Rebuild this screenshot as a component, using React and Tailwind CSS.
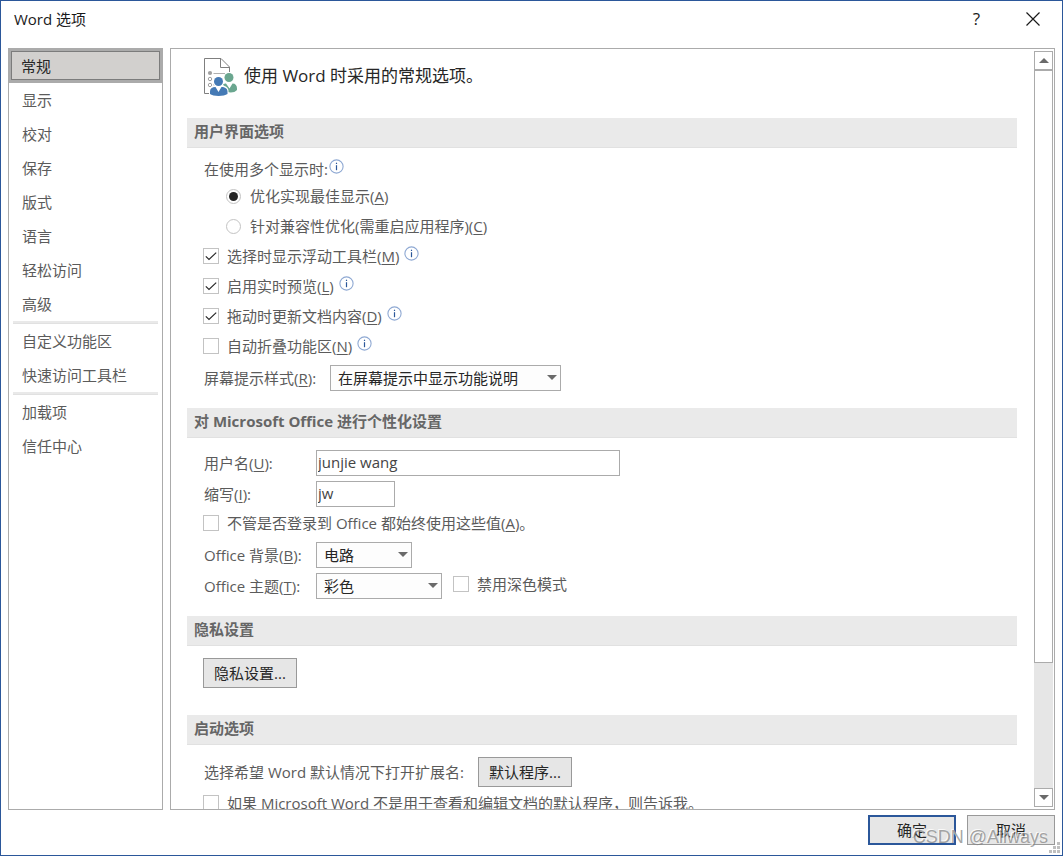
import { useRef } from "react";

const navGroups = [
  ["常规", "显示", "校对", "保存", "版式", "语言", "轻松访问", "高级"],
  ["自定义功能区", "快速访问工具栏"],
  ["加载项", "信任中心"],
];

function Key({ k }) {
  return (
    <>
      (<span className="underline underline-offset-2">{k}</span>)
    </>
  );
}

function InfoIcon() {
  return (
    <svg className="mb-1.5 ml-px size-[15px] shrink-0" viewBox="0 0 15 15" fill="none" aria-hidden="true">
      <circle cx="7.5" cy="7.5" r="6.6" stroke="#8fa9d3" strokeWidth="1.1" />
      <path d="M7.5 6.2V11.2" stroke="#2b579a" strokeWidth="1.2" />
      <path d="M7.5 3.7V5" stroke="#2b579a" strokeWidth="1.2" />
    </svg>
  );
}

function PageIcon() {
  return (
    <svg className="size-10 shrink-0" viewBox="0 0 40 40" fill="none" aria-hidden="true">
      <path d="M6 36.5H1.5V1.5H18L26.5 10V15" stroke="#7f7f7f" />
      <path d="M17.5 1.5V10.5H26.5" stroke="#7f7f7f" />
      <circle cx="7" cy="16" r="2.1" fill="#a0a0a0" />
      <path d="M10.5 16.5H22" stroke="#b0b0b0" />
      <circle cx="7" cy="22" r="1.7" stroke="#a0a0a0" />
      <circle cx="7" cy="28" r="1.7" stroke="#a0a0a0" />
      <path d="M10 28H12" stroke="#b0b0b0" />
      <circle cx="26" cy="20.5" r="4.5" fill="#6aa68f" />
      <path d="M20 27.5C21 26.5 22 26.5 23 26.5L26.5 31.5L29.5 26.5C32.5 26.5 34 28.5 34 31.5V33C32 35.5 28 36 24 35Z" fill="#6aa68f" />
      <circle cx="15.5" cy="24.5" r="5.3" fill="#fff" />
      <path d="M6 38V34C6 30 9 28.5 12 28.5H19C23 28.5 25.5 31 25.5 34V38Z" fill="#fff" />
      <circle cx="15.5" cy="24.5" r="4.5" fill="#457ab5" />
      <path d="M7 34.5C7 31.5 9 30 12.5 30L15.5 35L18.5 30C22 30 24.5 31.5 24.5 34.5V37C21 39.500 10 39.500 7 37Z" fill="#457ab5" />
    </svg>
  );
}

function CheckRow({ id, checked, info, tall, children }) {
  return (
    <div className={`flex items-center ${tall ? "h-8" : "h-[30px]"}`}>
      <Check id={id} checked={checked}>{children}</Check>
      {info && <span className="ml-1"><InfoIcon /></span>}
    </div>
  );
}

function Check({ id, checked, children }) {
  return (
    <>
      <span className="relative block size-4 shrink-0">
        <input
          id={id}
          type="checkbox"
          defaultChecked={checked}
          className="peer block size-4 appearance-none border border-[#c3c3c3] bg-white"
        />
        <svg className="pointer-events-none absolute inset-0 hidden size-4 peer-checked:block" viewBox="0 0 16 16" fill="none" aria-hidden="true">
          <path d="M2.8 8.3L6 11.5L13.2 4.6" stroke="#262626" strokeWidth="1.15" />
        </svg>
      </span>
      <label htmlFor={id} className="ml-2 whitespace-nowrap">{children}</label>
    </>
  );
}

function Radio({ id, checked, children }) {
  return (
    <div className="flex h-[30px] items-center pl-[23px]">
      <span className="relative block size-[15px] shrink-0">
        <input
          id={id}
          name="display"
          type="radio"
          defaultChecked={checked}
          className="peer block size-[15px] appearance-none rounded-full border border-[#c3c3c3] bg-white"
        />
        <span className="pointer-events-none absolute inset-[3px] hidden rounded-full bg-[#262626] peer-checked:block" />
      </span>
      <label htmlFor={id} className="ml-[9px] whitespace-nowrap">{children}</label>
    </div>
  );
}

function Select({ id, value, width }) {
  return (
    <span className={`relative block h-[26px] ${width}`}>
      <select id={id} className="block h-full w-full appearance-none border border-[#ababab] bg-[#fdfdfd] pl-[7px] leading-6 text-[#262626]">
        <option>{value}</option>
      </select>
      <svg className="pointer-events-none absolute right-1 top-[10px] h-[5px] w-[10px]" viewBox="0 0 10 5" aria-hidden="true">
        <path d="M0 0H10L5 5Z" fill="#6a6a6a" />
      </svg>
    </span>
  );
}

function Bar({ children }) {
  return (
    <h2 className="flex h-[30px] items-center border-b border-[#e1e1e1] bg-[#eaeaea] pb-1 pl-[7px] font-bold text-[#666]">
      {children}
    </h2>
  );
}

function Button({ children }) {
  return (
    <button type="button" className="h-[30px] w-[94px] border border-[#999] bg-[#e6e6e6] text-[#262626]">
      {children}
    </button>
  );
}

function Field({ id, label, children }) {
  return (
    <div className="flex h-[26px] items-center">
      <label htmlFor={id} className="w-[113px] shrink-0 whitespace-nowrap pl-px">{label}</label>
      {children}
    </div>
  );
}

const inputClass = "h-[26px] border border-[#ababab] bg-white pb-0.5 pl-px text-[#444]";

export default function App() {
  const pane = useRef(null);
  const scroll = (dy) => pane.current.scrollBy({ top: dy });

  return (
    <div className="relative flex h-screen flex-col border border-[#2b579a] bg-white font-['Open_Sans','Noto_Sans_CJK_SC',sans-serif] text-[15px] leading-6 text-[#5b5b5b]">
      <header className="flex h-[47px] shrink-0 items-start justify-between pl-[13px] pr-[22px] text-[#1a1a1a]">
        <h1 className="mt-1.5">Word 选项</h1>
        <div className="flex items-center gap-[46px] pt-1.5">
          <button type="button" aria-label="帮助" className="h-6 text-[17px] leading-6">?</button>
          <button type="button" aria-label="关闭" className="flex size-[14px] items-center">
            <svg className="size-[14px]" viewBox="0 0 14 14" fill="none" aria-hidden="true">
              <path d="M0.5 0.5L13.5 13.5M13.5 0.5L0.5 13.5" stroke="#1a1a1a" strokeWidth="1.2" />
            </svg>
          </button>
        </div>
      </header>

      <div className="flex min-h-0 flex-1 gap-[7px] px-[7px]">
        <nav className="w-[155px] shrink-0 border border-[#ababab]">
          {navGroups.map((group, g) => (
            <ul key={g}>
              {g > 0 && <li aria-hidden="true" className="mx-1 h-[3px] border-b border-[#e1e1e1] bg-[#e9e9e9]" />}
              {group.map((name) =>
                name === "常规" ? (
                  <li key={name} className="-mx-px -mt-px h-[35px] bg-[#ababab] p-[3px]">
                    <a href="#general" aria-current="page" className="flex h-full items-center border border-[#7c7c7c] bg-[#d2d0ce] pl-[9px] text-[#262626]">
                      {name}
                    </a>
                  </li>
                ) : (
                  <li key={name}>
                    <a href="#section" className="flex h-[34px] items-center whitespace-nowrap pl-[13px]">{name}</a>
                  </li>
                )
              )}
            </ul>
          ))}
        </nav>

        <main className="flex min-w-0 flex-1 border border-[#ababab]">
          <div ref={pane} className="min-w-0 flex-1 overflow-y-auto pl-4 pr-[17px] [scrollbar-width:none]">
            <div className="flex h-[69px] items-start pl-4 pt-2">
              <PageIcon />
              <p className="ml-px mt-[7px] whitespace-nowrap text-[17px] text-[#262626]">使用 Word 时采用的常规选项。</p>
            </div>

            <Bar>用户界面选项</Bar>
            <section className="pb-[17px] pl-4 pt-[9px]">
              <div className="flex h-6 items-center pl-px">
                在使用多个显示时:
                <InfoIcon />
              </div>
              <Radio id="opt-best" checked>优化实现最佳显示<Key k="A" /></Radio>
              <Radio id="opt-compat">针对兼容性优化(需重启应用程序)<Key k="C" /></Radio>
              <CheckRow id="minibar" checked info>选择时显示浮动工具栏<Key k="M" /></CheckRow>
              <CheckRow id="preview" checked info>启用实时预览<Key k="L" /></CheckRow>
              <CheckRow id="drag" checked info>拖动时更新文档内容<Key k="D" /></CheckRow>
              <CheckRow id="collapse" info>自动折叠功能区<Key k="N" /></CheckRow>
              <div className="flex items-center gap-3.5 pl-px pt-1">
                <label htmlFor="tips" className="whitespace-nowrap">屏幕提示样式<Key k="R" />:</label>
                <Select id="tips" value="在屏幕提示中显示功能说明" width="w-[231px]" />
              </div>
            </section>

            <Bar>对 Microsoft Office 进行个性化设置</Bar>
            <section className="pb-[17px] pl-4 pt-3">
              <div className="flex flex-col gap-[5px]">
                <Field id="user" label={<>用户名<Key k="U" />:</>}>
                  <input id="user" defaultValue="junjie wang" className={`${inputClass} w-[304px]`} />
                </Field>
                <Field id="initials" label={<>缩写<Key k="I" />:</>}>
                  <input id="initials" defaultValue="jw" className={`${inputClass} w-[79px]`} />
                </Field>
              </div>
              <CheckRow id="always" tall>不管是否登录到 Office 都始终使用这些值<Key k="A" />。</CheckRow>
              <div className="flex flex-col gap-[5px] pt-[3px]">
                <Field id="bg" label={<>Office 背景<Key k="B" />:</>}>
                  <Select id="bg" value="电路" width="w-24" />
                </Field>
                <Field id="theme" label={<>Office 主题<Key k="T" />:</>}>
                  <Select id="theme" value="彩色" width="w-[126px]" />
                  <div className="ml-[11px] flex items-center pb-1">
                    <Check id="nodark">禁用深色模式</Check>
                  </div>
                </Field>
              </div>
            </section>

            <Bar>隐私设置</Bar>
            <section className="pb-[27px] pl-4 pt-3">
              <div className="flex"><Button>隐私设置...</Button></div>
            </section>

            <Bar>启动选项</Bar>
            <section className="pb-4 pl-4 pt-3">
              <div className="flex items-center gap-3.5 pl-px">
                <span className="whitespace-nowrap">选择希望 Word 默认情况下打开扩展名:</span>
                <Button>默认程序...</Button>
              </div>
              <CheckRow id="tellme" tall>如果 Microsoft Word 不是用于查看和编辑文档的默认程序，则告诉我。</CheckRow>
            </section>
          </div>

          <div className="my-0.5 mr-px flex w-[19px] shrink-0 flex-col bg-[#e6e6e6]">
            <button type="button" aria-label="向上滚动" onClick={() => scroll(-40)} className="flex h-[19px] shrink-0 items-center justify-center border border-[#ababab] bg-white">
              <svg className="h-[5px] w-[10px]" viewBox="0 0 10 5" aria-hidden="true"><path d="M0 5H10L5 0Z" fill="#6a6a6a" /></svg>
            </button>
            <div className="flex-[593] border border-[#ababab] bg-white" />
            <div className="flex-[126]" />
            <button type="button" aria-label="向下滚动" onClick={() => scroll(40)} className="flex h-[19px] shrink-0 items-center justify-center border border-[#ababab] bg-white">
              <svg className="h-[5px] w-[10px]" viewBox="0 0 10 5" aria-hidden="true"><path d="M0 0H10L5 5Z" fill="#6a6a6a" /></svg>
            </button>
          </div>
        </main>
      </div>

      <footer className="flex h-[45px] shrink-0 items-start justify-end gap-[11px] pr-[7px] pt-[5px]">
        <button type="button" className="h-[30px] w-[88px] border-2 border-[#2b579a] bg-[#e6e6e6] text-[#262626]">确定</button>
        <button type="button" className="h-[30px] w-[88px] border border-[#999] bg-[#e6e6e6] text-[#262626]">取消</button>
      </footer>

      <svg className="pointer-events-none absolute bottom-0.5 right-0.5 size-[11px]" viewBox="0 0 11 11" fill="#bfbfbf" aria-hidden="true">
        <path d="M8 0h3v3h-3zM4 4h3v3h-3zM8 4h3v3h-3zM0 8h3v3h-3zM4 8h3v3h-3zM8 8h3v3h-3z" />
      </svg>
      <span className="pointer-events-none absolute bottom-1.5 right-3.5 font-['Liberation_Sans',sans-serif] text-[18px] text-[#808080]/70 [text-shadow:-1px_-1px_0_rgba(255,255,255,0.8)]">
        CSDN @Allways
      </span>
    </div>
  );
}
